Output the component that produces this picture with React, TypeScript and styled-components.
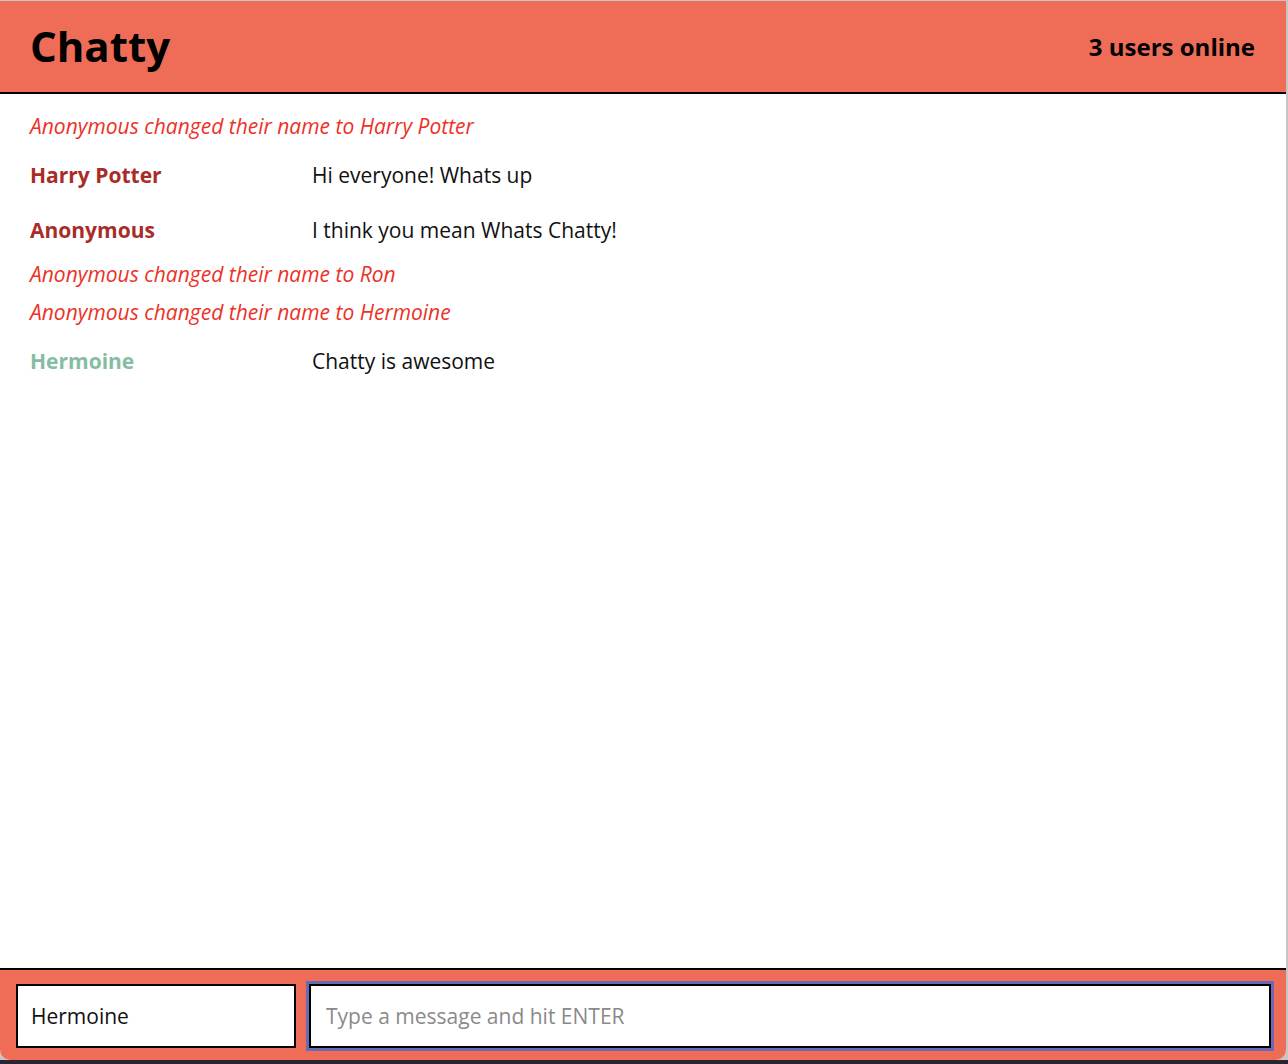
import styled, { createGlobalStyle } from "styled-components";

const coral = "#ef6d56";

const GlobalStyle = createGlobalStyle`
  html, body {
    margin: 0;
    padding: 0;
  }
  body {
    font-family: "Open Sans", "Liberation Sans", sans-serif;
    background: linear-gradient(to bottom, #c6c6c6 1060px, #2b2433 1060px);
    min-height: 1064px;
  }
`;

type Item =
  | { kind: "system"; text: string }
  | { kind: "message"; user: string; color: string; text: string };

const items: Item[] = [
  { kind: "system", text: "Anonymous changed their name to Harry Potter" },
  { kind: "message", user: "Harry Potter", color: "#a82d28", text: "Hi everyone! Whats up" },
  { kind: "message", user: "Anonymous", color: "#a82d28", text: "I think you mean Whats Chatty!" },
  { kind: "system", text: "Anonymous changed their name to Ron" },
  { kind: "system", text: "Anonymous changed their name to Hermoine" },
  { kind: "message", user: "Hermoine", color: "#86bda2", text: "Chatty is awesome" },
];

export default function App() {
  return (
    <>
      <GlobalStyle />
      <Window>
        <NavBar>
          <Brand>Chatty</Brand>
          <Online>3 users online</Online>
        </NavBar>
        <Messages>
          {items.map((item, i) =>
            item.kind === "system" ? (
              <SystemMessage key={i}>{item.text}</SystemMessage>
            ) : (
              <MessageRow key={i}>
                <Username $color={item.color}>{item.user}</Username>
                <Content>{item.text}</Content>
              </MessageRow>
            )
          )}
        </Messages>
        <ChatBar>
          <NameInput defaultValue="Hermoine" />
          <MessageInput placeholder="Type a message and hit ENTER" />
        </ChatBar>
      </Window>
    </>
  );
}

const Window = styled.div`
  display: flex;
  flex-direction: column;
  width: 1286px;
  height: 1059px;
  margin-top: 1px;
  background: #fff;
  border-bottom-left-radius: 10px;
  border-bottom-right-radius: 10px;
  overflow: hidden;
`;

const NavBar = styled.nav`
  display: flex;
  align-items: center;
  justify-content: space-between;
  height: 91px;
  padding: 0 31px 0 30px;
  background-color: ${coral};
  border-bottom: 2px solid #000;
  flex-shrink: 0;
`;

const Brand = styled.h1`
  margin: 0;
  font-size: 42px;
  font-weight: 700;
  color: #000;
  line-height: 1;
  padding-bottom: 2px;
`;

const Online = styled.span`
  font-size: 24px;
  font-weight: 700;
  color: #000;
  line-height: 1;
`;

const Messages = styled.main`
  flex: 1;
  padding: 13px 31px 0 30px;
  overflow: hidden;
`;

const SystemMessage = styled.div`
  height: 38px;
  line-height: 38px;
  font-size: 21px;
  font-style: italic;
  color: #ec3228;
`;

const MessageRow = styled.div`
  display: flex;
  height: 55px;
  padding-top: 5px;
  box-sizing: border-box;
  line-height: 50px;
  font-size: 21px;
`;

const Username = styled.span<{ $color: string }>`
  width: 282px;
  flex-shrink: 0;
  font-weight: 700;
  color: ${(p) => p.$color};
`;

const Content = styled.span`
  color: #111;
`;

const ChatBar = styled.footer`
  display: flex;
  gap: 13px;
  height: 92px;
  box-sizing: border-box;
  padding: 14px 15px 12px 16px;
  background-color: ${coral};
  border-top: 2px solid #000;
  flex-shrink: 0;
`;

const BaseInput = styled.input`
  box-sizing: border-box;
  height: 64px;
  border: 2px solid #000;
  background: #fff;
  font-family: "Open Sans", "Liberation Sans", sans-serif;
  font-size: 21px;
  color: #111;
  outline: none;

  &::placeholder {
    color: #8a8a8a;
  }
`;

const NameInput = styled(BaseInput)`
  width: 280px;
  padding: 0 13px;
`;

const MessageInput = styled(BaseInput)`
  flex: 1;
  padding: 0 15px;
  box-shadow: 0 0 0 3px #6b69b3;
`;
